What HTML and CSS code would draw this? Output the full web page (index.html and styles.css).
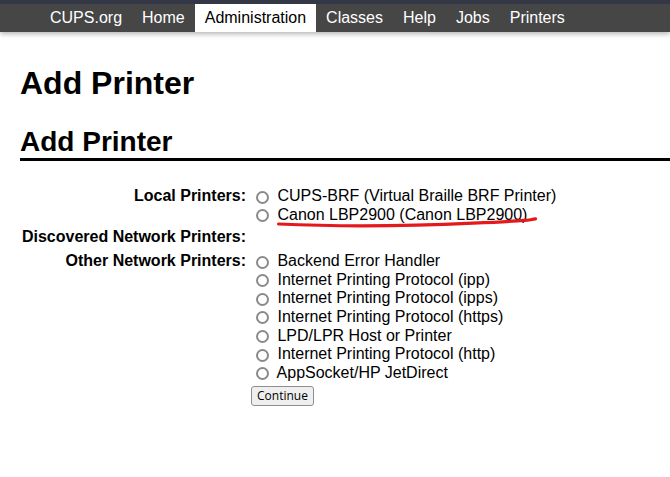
FILE: index.html
```html
<!DOCTYPE html>
<html lang="en">
<head>
<meta charset="utf-8">
<title>Add Printer - CUPS</title>
<link rel="stylesheet" href="styles.css">
</head>
<body>
<header class="site-header">
  <div class="top-strip"></div>
  <nav class="nav-bar">
    <ul class="nav-list">
      <li><a class="nav-link" href="#">CUPS.org</a></li>
      <li><a class="nav-link" href="#">Home</a></li>
      <li><a class="nav-link active" href="#">Administration</a></li>
      <li><a class="nav-link" href="#">Classes</a></li>
      <li><a class="nav-link" href="#">Help</a></li>
      <li><a class="nav-link" href="#">Jobs</a></li>
      <li><a class="nav-link" href="#">Printers</a></li>
    </ul>
  </nav>
</header>
<main class="content">
  <h1 class="page-title">Add Printer</h1>
  <h2 class="section-title">Add Printer</h2>
  <form class="printer-form">
    <div class="field-label">Local Printers:</div>
    <div class="field-value">
      <label class="option"><input class="radio" type="radio" name="device"> CUPS-BRF (Virtual Braille BRF Printer)</label>
      <label class="option marked"><input class="radio" type="radio" name="device"> Canon LBP2900 (Canon LBP2900)<svg class="scribble" width="264" height="12" viewBox="0 0 264 12"><path d="M2.5 7 C 60 9.6, 130 9.2, 197 6.2 S 250 3.2, 259.5 1.8" fill="none" stroke="#e3191c" stroke-width="3.2" stroke-linecap="round"/></svg></label>
    </div>
    <div class="field-label">Discovered Network Printers:</div>
    <div class="field-value empty"></div>
    <div class="field-label">Other Network Printers:</div>
    <div class="field-value">
      <label class="option"><input class="radio" type="radio" name="device"> Backend Error Handler</label>
      <label class="option"><input class="radio" type="radio" name="device"> Internet Printing Protocol (ipp)</label>
      <label class="option"><input class="radio" type="radio" name="device"> Internet Printing Protocol (ipps)</label>
      <label class="option"><input class="radio" type="radio" name="device"> Internet Printing Protocol (https)</label>
      <label class="option"><input class="radio" type="radio" name="device"> LPD/LPR Host or Printer</label>
      <label class="option"><input class="radio" type="radio" name="device"> Internet Printing Protocol (http)</label>
      <label class="option"><input class="radio" type="radio" name="device"> AppSocket/HP JetDirect</label>
    </div>
    <div class="field-label"></div>
    <div class="field-value">
      <button class="continue-btn" type="button">Continue</button>
    </div>
  </form>
</main>
</body>
</html>
```
FILE: styles.css
```css
html, body {
  margin: 0;
  padding: 0;
  background: #ffffff;
}

body {
  font-family: "Liberation Sans", Arial, sans-serif;
  font-size: 16px;
  color: #000000;
}

.site-header {
  box-shadow: 0 2px 5px rgba(0, 0, 0, 0.3);
  position: relative;
  z-index: 2;
}

.top-strip {
  height: 4px;
  background: #343846;
}

.nav-bar {
  height: 28px;
  background: #464646;
}

.nav-list {
  display: flex;
  margin: 0;
  padding: 0 0 0 40px;
  list-style: none;
}

.nav-link {
  display: block;
  padding: 0 10px;
  line-height: 28px;
  height: 28px;
  color: #ffffff;
  text-decoration: none;
}

.nav-link.active {
  background: #ffffff;
  color: #000000;
}

.content {
  padding: 0 0 0 20px;
}

.page-title {
  margin: 33px 0 0;
  font-size: 32px;
  line-height: 37px;
  font-weight: bold;
}

.section-title {
  margin: 24px 0 0;
  font-size: 28px;
  line-height: 32px;
  font-weight: bold;
  border-bottom: 3px solid #000000;
}

.printer-form {
  display: grid;
  grid-template-columns: 226px 1fr;
  column-gap: 5px;
  row-gap: 3.5px;
  align-items: start;
  margin-top: 26px;
  line-height: 18.6px;
}

.field-label {
  font-weight: bold;
  text-align: right;
  white-space: nowrap;
}

.field-value.empty {
  min-height: 21px;
}

.option {
  display: block;
  white-space: nowrap;
}

.option.marked {
  position: relative;
}

.radio {
  appearance: none;
  -webkit-appearance: none;
  box-sizing: border-box;
  width: 13px;
  height: 13px;
  margin: 0 4px 0 5px;
  vertical-align: -2.5px;
  border: 2px solid #8a8a8a;
  border-radius: 50%;
  background: #ffffff;
}

.scribble {
  position: absolute;
  left: 25px;
  top: 11px;
  overflow: visible;
}

.continue-btn {
  margin-top: 0;
  height: 20px;
  padding: 0 5px;
  font-family: "Open Sans", "Noto Sans", sans-serif;
  font-size: 12px;
  line-height: 18px;
  color: #000000;
  background: #efefef;
  border: 1px solid #8f8f8f;
  border-radius: 3px;
}
```
